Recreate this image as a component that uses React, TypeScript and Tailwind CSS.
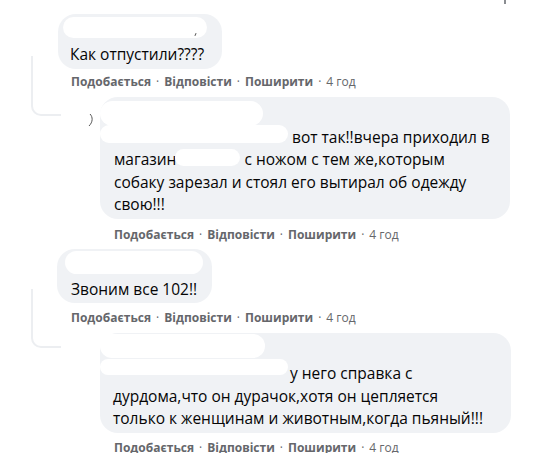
import React from "react";

const Actions = ({ className = "" }: { className?: string }) => (
  <div
    className={`flex items-center h-[14px] text-[12px] leading-[14px] text-[#65676b] ${className}`}
  >
    <span className="font-bold">Подобається</span>
    <span className="mx-[5px]">·</span>
    <span className="font-bold">Відповісти</span>
    <span className="mx-[5px]">·</span>
    <span className="font-bold">Поширити</span>
    <span className="mx-[5px]">·</span>
    <span>4 год</span>
  </div>
);

// white paint-over used in the screenshot to hide names
const Blob = ({ className }: { className: string }) => (
  <div className={`absolute bg-white rounded-full ${className}`} />
);

const Bubble = ({
  className,
  children,
}: {
  className: string;
  children: React.ReactNode;
}) => (
  <div className={`relative rounded-[18px] bg-[#f0f2f5] pr-3 pt-2 pb-[3px] ${className}`}>
    <div className="h-[21px]" />
    {children}
  </div>
);

export default function App() {
  return (
    <div className="relative w-[557px] h-[453px] overflow-hidden bg-white pt-[14px] font-['Open_Sans','Noto_Sans',sans-serif] text-[#050505]">
      <div className="absolute left-[504px] top-0 w-[2px] h-[4px] bg-[#8a8d91]" />

      {/* thread 1 */}
      <div className="relative flex flex-col">
        <div className="absolute left-[31px] top-[42px] w-[30px] h-[60px] border-l-2 border-b-2 border-[#eceef1] rounded-bl-[10px]" />
        <svg className="absolute left-[88px] top-[99px]" width="6" height="14" viewBox="0 0 6 14">
          <path d="M2 1 C5 4 5 9 1 13" stroke="#555" strokeWidth="1" fill="none" />
        </svg>

        <div className="pl-[58px]">
          <Bubble className="w-[164px] pl-3">
            <p className="text-[15.5px] leading-[22.5px] whitespace-nowrap">
              Как отпустили????
            </p>
            <Blob className="left-[5px] top-[3px] w-[144px] h-[21px]" />
            <div className="absolute left-[137px] top-[19px] w-[1px] h-[3px] bg-[#555] rotate-[25deg]" />
          </Bubble>
          <Actions className="mt-[6px] ml-[13px]" />
        </div>

        <div className="pl-[100px] mt-[8px]">
          <Bubble className="w-[410px] pl-[14px]">
            <p className="text-[15.5px] leading-[22.5px] whitespace-nowrap">
              <span className="inline-block w-[178px]" />
              вот так!!вчера приходил в
              <br />
              магазин
              <span className="inline-block w-[68px]" />
              с ножом с тем же,которым
              <br />
              собаку зарезал и стоял его вытирал об одежду
              <br />
              свою!!!
            </p>
            <Blob className="left-0 top-[4px] w-[163px] h-[25px]" />
            <Blob className="left-0 top-[28px] w-[188px] h-[18px]" />
            <Blob className="left-[75px] top-[52px] w-[65px] h-[17px]" />
          </Bubble>
          <Actions className="mt-[9px] ml-[14px]" />
        </div>
      </div>

      {/* thread 2 */}
      <div className="relative flex flex-col mt-[7px]">
        <div className="absolute left-[31px] top-[40px] w-[30px] h-[59px] border-l-2 border-b-2 border-[#eceef1] rounded-bl-[10px]" />

        <div className="pl-[57px]">
          <Bubble className="w-[155px] pl-[14px]">
            <p className="text-[15.5px] leading-[22.5px] whitespace-nowrap">
              Звоним все 102!!
            </p>
            <Blob className="left-[8px] top-[2px] w-[138px] h-[23px]" />
          </Bubble>
          <Actions className="mt-[8px] ml-[14px]" />
        </div>

        <div className="pl-[100px] mt-[8px]">
          <Bubble className="w-[411px] pl-[13px]">
            <p className="text-[15.5px] leading-[22.5px] whitespace-nowrap">
              <span className="inline-block w-[177px]" />
              у него справка с
              <br />
              дурдома,что он дурачок,хотя он цепляется
              <br />
              только к женщинам и животным,когда пьяный!!!
            </p>
            <Blob className="left-0 top-[1px] w-[165px] h-[24px]" />
            <Blob className="left-0 top-[26px] w-[188px] h-[16px]" />
          </Bubble>
          <Actions className="mt-[8px] ml-[14px]" />
        </div>
      </div>
    </div>
  );
}
